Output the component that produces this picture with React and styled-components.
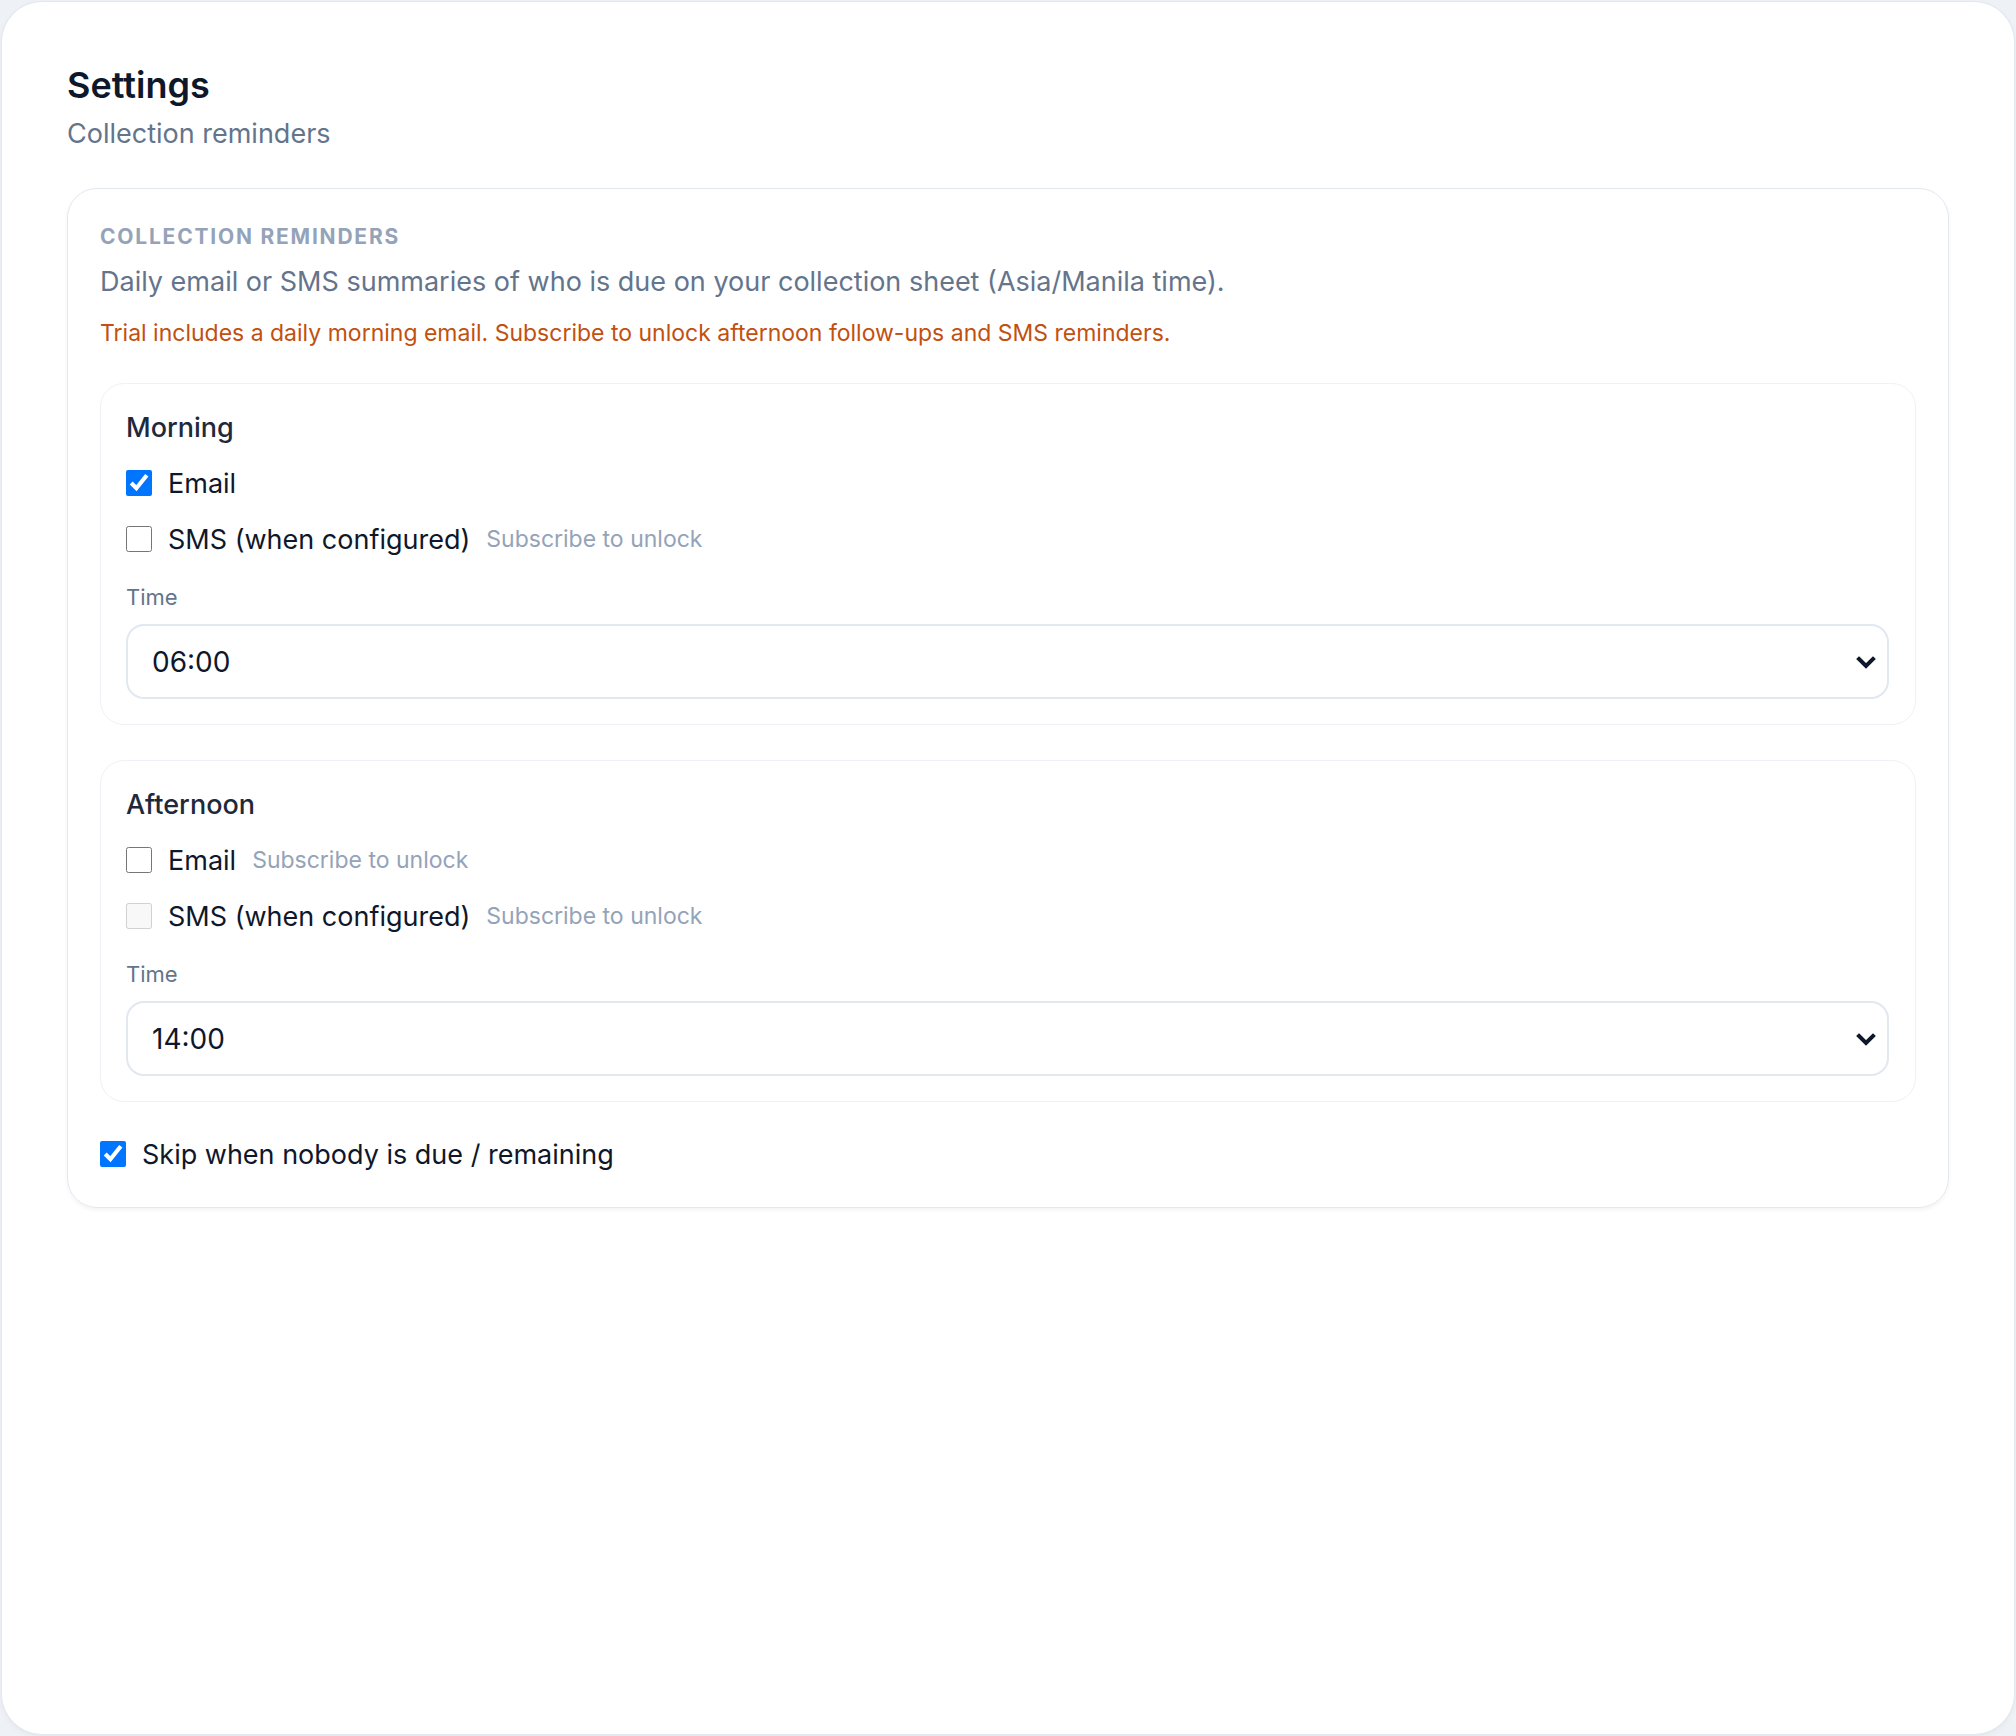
import React, { useState } from "react";
import styled, { createGlobalStyle } from "styled-components";

const GlobalStyle = createGlobalStyle`
  * {
    box-sizing: border-box;
  }
  body {
    margin: 0;
    background: #eef2f6;
    font-family: Inter, "Noto Sans", "Liberation Sans", sans-serif;
    color: #0f172a;
  }
`;

const Panel = styled.div`
  margin: 2px;
  min-height: calc(100vh - 4px);
  background: #ffffff;
  border-radius: 40px;
  box-shadow: 0 0 0 1px #e3e8ef, 0 2px 6px rgba(15, 23, 42, 0.06);
  padding: 61px 65px;
`;

const Title = styled.h1`
  margin: 0;
  font-size: 36px;
  line-height: 44px;
  font-weight: 600;
  color: #0f172a;
`;

const Subtitle = styled.p`
  margin: 9px 0 0;
  font-size: 27px;
  line-height: 36px;
  color: #64748b;
`;

const Card = styled.section`
  margin-top: 36px;
  border: 1px solid #e2e8f0;
  border-radius: 30px;
  padding: 36px 32px 35px;
  box-shadow: 0 2px 4px rgba(15, 23, 42, 0.05);
`;

const Eyebrow = styled.h2`
  margin: 0;
  font-size: 21px;
  line-height: 24px;
  font-weight: 700;
  letter-spacing: 0.085em;
  text-transform: uppercase;
  color: #94a3b8;
`;

const Description = styled.p`
  margin: 15px 0 0;
  font-size: 27px;
  line-height: 36px;
  color: #64748b;
`;

const Notice = styled.p`
  margin: 17px 0 0;
  font-size: 23px;
  line-height: 32px;
  color: #c2500f;
`;

const Slot = styled.div`
  margin-top: ${({ first }) => (first ? "34px" : "35px")};
  border: 1px solid #eef2f6;
  border-radius: 24px;
  padding: 26px 26px 25px 25px;
`;

const SlotTitle = styled.h3`
  margin: 0;
  font-size: 27px;
  line-height: 36px;
  font-weight: 500;
  color: #1e293b;
`;

const OptionRow = styled.label`
  display: flex;
  align-items: center;
  gap: 16px;
  height: 36px;
  margin-top: ${({ spacing }) => spacing || 19}px;
  font-size: 27px;
  color: #0f172a;
`;

const Box = styled.input.attrs({ type: "checkbox" })`
  width: 26px;
  height: 26px;
  margin: 0;
  flex-shrink: 0;
  accent-color: #0075ff;
`;

const Locked = styled.span`
  margin-left: 0;
  font-size: 23px;
  color: #94a3b8;
`;

const FieldLabel = styled.div`
  margin-top: 25px;
  font-size: 22px;
  line-height: 30px;
  color: #64748b;
`;

const SelectWrap = styled.div`
  position: relative;
  margin-top: 12px;
`;

const Select = styled.select`
  appearance: none;
  width: 100%;
  height: 75px;
  border: 2px solid #e2e8f0;
  border-radius: 18px;
  background: #ffffff;
  padding: 0 60px 0 24px;
  font-family: inherit;
  font-size: 28px;
  color: #0f172a;
`;

const Chevron = styled.svg`
  position: absolute;
  right: 12px;
  top: 50%;
  width: 22px;
  height: 16px;
  transform: translateY(-50%);
  pointer-events: none;
`;

const times = ["05:00", "06:00", "07:00", "08:00", "12:00", "13:00", "14:00", "15:00", "16:00"];

const TimeSelect = ({ value, onChange }) => (
  <SelectWrap>
    <Select value={value} onChange={(e) => onChange(e.target.value)}>
      {times.map((t) => (
        <option key={t} value={t}>
          {t}
        </option>
      ))}
    </Select>
    <Chevron viewBox="0 0 22 16" fill="none" stroke="#0f172a" strokeWidth="4" strokeLinecap="square" strokeLinejoin="miter">
      <path d="M4 5l7 7 7-7" />
    </Chevron>
  </SelectWrap>
);

const App = () => {
  const [morningTime, setMorningTime] = useState("06:00");
  const [afternoonTime, setAfternoonTime] = useState("14:00");
  const [morningEmail, setMorningEmail] = useState(true);
  const [skip, setSkip] = useState(true);

  return (
    <>
      <GlobalStyle />
      <Panel>
        <Title>Settings</Title>
        <Subtitle>Collection reminders</Subtitle>

        <Card>
          <Eyebrow>Collection reminders</Eyebrow>
          <Description>
            Daily email or SMS summaries of who is due on your collection sheet (Asia/Manila time).
          </Description>
          <Notice>
            Trial includes a daily morning email. Subscribe to unlock afternoon follow-ups and SMS reminders.
          </Notice>

          <Slot first>
            <SlotTitle>Morning</SlotTitle>
            <OptionRow>
              <Box checked={morningEmail} onChange={(e) => setMorningEmail(e.target.checked)} />
              Email
            </OptionRow>
            <OptionRow spacing={20}>
              <Box />
              SMS (when configured)
              <Locked>Subscribe to unlock</Locked>
            </OptionRow>
            <FieldLabel>Time</FieldLabel>
            <TimeSelect value={morningTime} onChange={setMorningTime} />
          </Slot>

          <Slot>
            <SlotTitle>Afternoon</SlotTitle>
            <OptionRow>
              <Box />
              Email
              <Locked>Subscribe to unlock</Locked>
            </OptionRow>
            <OptionRow spacing={20}>
              <Box disabled />
              SMS (when configured)
              <Locked>Subscribe to unlock</Locked>
            </OptionRow>
            <FieldLabel>Time</FieldLabel>
            <TimeSelect value={afternoonTime} onChange={setAfternoonTime} />
          </Slot>

          <OptionRow spacing={34}>
            <Box checked={skip} onChange={(e) => setSkip(e.target.checked)} />
            Skip when nobody is due / remaining
          </OptionRow>
        </Card>
      </Panel>
    </>
  );
};

export default App;
